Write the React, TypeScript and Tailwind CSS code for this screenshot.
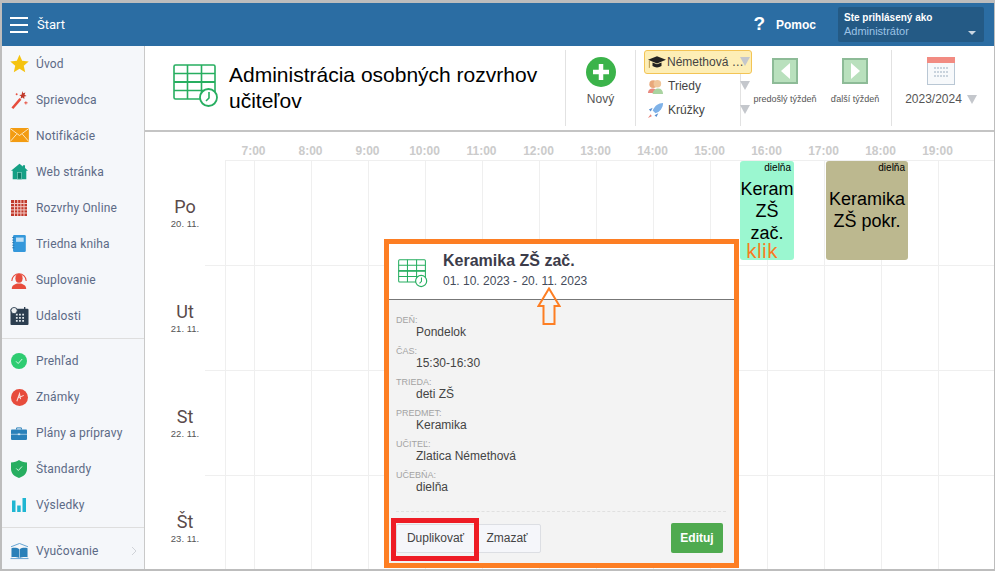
import React from "react";

const TableIcon = ({ className = "" }: { className?: string }) => (
  <svg viewBox="0 0 46 44" className={className} fill="none" stroke="#27ae60" strokeWidth="1.6">
    <rect x="1" y="1" width="41" height="34" rx="1.5" />
    <path d="M1 9.5H42M1 18H42M1 26.5H32M14.5 1V35M28.5 1V35" />
    <path d="M1 18H42" strokeWidth="2" />
    <circle cx="35.5" cy="33.5" r="8.5" fill="#fff" strokeWidth="1.8" />
    <path d="M36 28V34L33 37" strokeWidth="1.6" />
  </svg>
);

const Star = () => (
  <svg viewBox="0 0 20 20" className="w-[19px] h-[19px]"><path d="M10 .8l2.8 6.3 6.9.7-5.2 4.6 1.5 6.8L10 15.6l-6 3.6 1.5-6.8L.3 7.8l6.9-.7z" fill="#f5c30f" /></svg>
);
const Wand = () => (
  <svg viewBox="0 0 20 20" className="w-[19px] h-[19px]">
    <path d="M1.5 18.5L10 8.5l2 1.8L3.5 20z" fill="#e74c3c" />
    <path d="M13 1l.8 2.4 2.4-.8-.9 2.5 2.2 1.2-2.5.6.1 2.5-2-1.6-2 1.4.6-2.5-2-1.4 2.5-.3z" fill="#c0392b" />
    <path d="M15 13.5h3.5M16.7 12v3.2M6 4.5h2M7 3.5v2" stroke="#e74c3c" strokeWidth="1" />
  </svg>
);
const Mail = () => (
  <svg viewBox="0 0 20 16" className="w-[19px] h-[15px]">
    <rect width="20" height="15" fill="#f39c12" />
    <path d="M0 .5L10 8l10-7.500M0 14.500L7 6.500M20 14.500L13 6.500" stroke="#fdebc8" strokeWidth="1" fill="none" />
  </svg>
);
const House = () => (
  <svg viewBox="0 0 20 20" className="w-[17px] h-[17px]">
    <path d="M10 1l4 3V2.500h2.500V6L20 9h-2v10H2V9H0z" fill="#16a085" />
    <rect x="7.500" y="11" width="5" height="8" fill="#0e7c66" stroke="#7fd1c0" strokeWidth=".8" />
  </svg>
);
const Cal = () => (
  <svg viewBox="0 0 16 16" className="w-[16px] h-[16px]">
    <rect width="16" height="16" fill="#c0392b" />
    <path d="M3.500 0V16M6.700 0V16M9.900 0V16M13 0V16M0 3.500H16M0 6.700H16M0 9.900H16M0 13H16" stroke="#f3c9c4" strokeWidth="1" />
  </svg>
);
const Book = () => (
  <svg viewBox="0 0 16 20" className="w-[14px] h-[17px]">
    <rect x="1" width="15" height="20" rx="1.500" fill="#3498db" />
    <rect x="4.500" y="3" width="9" height="5" fill="#bfe0f6" />
    <path d="M0 3h2.500M0 6h2.500M0 9h2.500M0 12h2.500M0 15h2.500" stroke="#1f6fa8" strokeWidth="1" />
  </svg>
);
const Person = () => (
  <svg viewBox="0 0 20 20" className="w-[18px] h-[18px]">
    <path d="M2 11a8 8 0 1 1 16 0" fill="none" stroke="#e74c3c" strokeWidth="1.200" />
    <ellipse cx="10" cy="8" rx="4" ry="5" fill="#e74c3c" />
    <path d="M2 20c0-4 3-5 6-6h4c3 1 6 2 6 6z" fill="#e74c3c" />
  </svg>
);
const Events = () => (
  <svg viewBox="0 0 20 20" className="w-[19px] h-[18px]">
    <rect y="2" width="20" height="18" rx="1" fill="#2c3e50" />
    <path d="M6 7.500h2v2H6zM9.500 7.500h2v2h-2zM13 7.500h2v2h-2zM6 11h2v2H6zM9.500 11h2v2h-2zM13 11h2v2h-2zM6 14.500h2v2H6zM9.500 14.500h2v2h-2zM13 14.500h2v2h-2z" fill="#dfe6ea" />
    <circle cx="4" cy="4" r="3.500" fill="#eceff1" stroke="#2c3e50" />
    <rect x="15" width="1.500" height="4" fill="#2c3e50" />
  </svg>
);
const Check = () => (
  <svg viewBox="0 0 16 16" className="w-[16px] h-[16px]">
    <circle cx="8" cy="8" r="8" fill="#2ecc71" />
    <path d="M5 8.300l2.200 2.200L11.200 6" stroke="#d7f7e4" strokeWidth="1" fill="none" />
  </svg>
);
const Grade = () => (
  <svg viewBox="0 0 16 16" className="w-[17px] h-[17px]">
    <circle cx="8" cy="8" r="8" fill="#e74c3c" />
    <path d="M5.500 11.500L8 4.500l1 5M6.500 8.500L12 6" stroke="#fbdcd8" strokeWidth="1" fill="none" />
  </svg>
);
const Case = () => (
  <svg viewBox="0 0 20 16" className="w-[16px] h-[15px]">
    <path d="M7 3V1h6v2" fill="none" stroke="#2980b9" strokeWidth="1.200" />
    <rect y="3" width="20" height="13" rx="1" fill="#2980b9" />
    <path d="M0 9h20" stroke="#d5e8f5" strokeWidth=".8" />
    <rect x="8.500" y="8" width="3" height="2" fill="#d5e8f5" />
  </svg>
);
const Shield = () => (
  <svg viewBox="0 0 16 18" className="w-[16px] h-[18px]">
    <path d="M8 0c2 1.500 5 2.500 8 2.500V9c0 4.500-3.500 7.500-8 9-4.500-1.500-8-4.500-8-9V2.500C3 2.500 6 1.500 8 0z" fill="#27ae60" />
    <path d="M5.300 8.500l2 2L11 6.500" stroke="#d7f7e4" strokeWidth="1" fill="none" />
  </svg>
);
const Bars = () => (
  <svg viewBox="0 0 14 14" className="w-[14px] h-[14px]">
    <path d="M0 2.500h3.500V14H0zM5.200 7.500h3.500V14H5.200zM10.500 0H14v14h-3.500z" fill="#1fb6d2" />
  </svg>
);
const OpenBook = () => (
  <svg viewBox="0 0 20 18" className="w-[19px] h-[17px]">
    <path d="M1 4l9-3.500L19 4" fill="none" stroke="#5d9fd0" strokeWidth="1" />
    <path d="M1.500 5.500C4 4.800 8 5 9.700 6.500V16C8 14.800 4 14.600 1.500 15zM18.500 5.500C16 4.800 12 5 10.300 6.500V16c1.700-1.200 5.700-1.400 8.200-1z" fill="#2980b9" />
    <path d="M.5 16.500H19.500" stroke="#5d9fd0" strokeWidth="1" />
  </svg>
);

const Item = ({ icon, label, extra }: { icon: React.ReactNode; label: string; extra?: React.ReactNode }) => (
  <div className="h-[36px] flex items-center">
    <div className="w-[34px] flex justify-center items-center shrink-0">{icon}</div>
    <span className="text-[12px] text-[#5c6a86] font-['Roboto','Liberation_Sans',sans-serif] tracking-[0.15px]">{label}</span>
    {extra}
  </div>
);

const Tri = ({ className = "" }: { className?: string }) => (
  <span className={`w-0 h-0 inline-block border-l-[5px] border-r-[5px] border-t-[9px] border-l-transparent border-r-transparent border-t-[#c4c7cc] ${className}`} />
);

const NavSquare = ({ dir }: { dir: "l" | "r" }) => (
  <div className="w-[26px] h-[26px] bg-[#b9e0bd] border-2 border-[#8dbb97] flex items-center justify-center">
    <span className={`w-0 h-0 border-t-[8px] border-b-[8px] border-t-transparent border-b-transparent ${dir === "l" ? "border-r-[9px] border-r-white" : "border-l-[9px] border-l-white"}`} />
  </div>
);

const hours = ["7:00","8:00","9:00","10:00","11:00","12:00","13:00","14:00","15:00","16:00","17:00","18:00","19:00"];
const days = [["Po","20. 11."],["Ut","21. 11."],["St","22. 11."],["Št","23. 11."]];

const Field = ({ k, v }: { k: string; v: string }) => (
  <div className="h-[31px]">
    <div className="text-[9px] leading-[10px] text-[#a3a3a3]">{k}</div>
    <div className="text-[12px] leading-[14px] text-[#444] pl-[20px]">{v}</div>
  </div>
);

export default function App() {
  return (
    <div className="w-[995px] h-[571px] overflow-hidden relative bg-white border-l-2 border-t-[3px] border-b-2 border-r border-[#bdbdbd] font-['Liberation_Sans',Arial,sans-serif]">
      <header className="h-[43px] bg-[#2b6da3] flex items-center text-white">
        <div className="w-[34px] pl-[8px] shrink-0 flex flex-col gap-[5px]">
          <span className="h-[2px] w-[18px] bg-white" /><span className="h-[2px] w-[18px] bg-white" /><span className="h-[2px] w-[18px] bg-white" />
        </div>
        <span className="text-[13px] ml-[1px] font-['Roboto','Liberation_Sans',sans-serif]">Štart</span>
        <div className="ml-auto flex items-center mr-[10px]">
          <span className="text-[19px] font-bold mr-[11px]">?</span>
          <span className="text-[12px] font-bold mr-[22px]">Pomoc</span>
          <div className="w-[146px] h-[35px] bg-[#245a85] rounded-[2px] pl-[6px] pt-[5px] relative">
            <div className="text-[10px] leading-[12px] font-bold">Ste prihlásený ako</div>
            <div className="text-[11px] leading-[15px] text-[#9cc3e6]">Administrátor</div>
            <span className="absolute right-[8px] bottom-[7px] w-0 h-0 border-l-[4px] border-r-[4px] border-t-[4px] border-l-transparent border-r-transparent border-t-[#c9d6e2]" />
          </div>
        </div>
      </header>

      <div className="flex h-[523px]">
        <aside className="w-[143px] shrink-0 bg-[#f5f7fa] border-r border-[#c9c9c9] flex flex-col">
          <Item icon={<Star />} label="Úvod" />
          <Item icon={<Wand />} label="Sprievodca" />
          <Item icon={<Mail />} label="Notifikácie" />
          <Item icon={<House />} label="Web stránka" />
          <Item icon={<Cal />} label="Rozvrhy Online" />
          <Item icon={<Book />} label="Triedna kniha" />
          <Item icon={<Person />} label="Suplovanie" />
          <Item icon={<Events />} label="Udalosti" />
          <div className="border-t border-[#dedede] h-[6px] mt-[4px]" />
          <Item icon={<Check />} label="Prehľad" />
          <Item icon={<Grade />} label="Známky" />
          <Item icon={<Case />} label="Plány a prípravy" />
          <Item icon={<Shield />} label="Štandardy" />
          <Item icon={<Bars />} label="Výsledky" />
          <div className="border-t border-[#dedede] h-[6px] mt-[4px]" />
          <Item icon={<OpenBook />} label="Vyučovanie" extra={<svg viewBox="0 0 6 10" className="w-[6px] h-[10px] ml-auto mr-[7px]" fill="none" stroke="#d0d3d8" strokeWidth="1"><path d="M1 1l4 4-4 4" /></svg>} />
        </aside>

        <main className="flex-1 min-w-0 flex flex-col">
          <div className="h-[86px] shrink-0 bg-white border-b-[2px] border-[#c4c4c4] flex items-center">
            <div className="w-[420px] shrink-0 flex items-center pl-[28px]">
              <TableIcon className="w-[46px] h-[44px] mr-[10px] shrink-0 -mt-[5px]" />
              <h1 className="text-[21px] leading-[26px] text-black font-normal">Administrácia osobných rozvrhov učiteľov</h1>
            </div>
            <div className="h-[76px] w-[71px] border-l border-r border-[#e2e2e2] flex flex-col items-center pt-[7px] -mr-px">
              <svg viewBox="0 0 30 30" className="w-[30px] h-[30px] shrink-0"><circle cx="15" cy="15" r="15" fill="#3bb34a" /><path d="M15 7v16M7 15h16" stroke="#fff" strokeWidth="4.500" /></svg>
              <span className="text-[12px] text-[#555] mt-[3px]">Nový</span>
            </div>
            <div className="h-[76px] w-[106px] border-r border-[#e2e2e2] pl-[9px] flex flex-col text-[12px] text-[#444] relative">
              <div className="h-[24px] w-[108px] shrink-0 bg-[#fdeeb6] border border-[#f3c455] rounded-[3px] flex items-center pl-[3px] relative z-10">
                <svg viewBox="0 0 20 16" className="w-[18px] h-[15px] shrink-0 mr-[1px]"><path d="M0 5l10-4 10 4-10 4z" fill="#222" /><path d="M5 8v4c3 2 7 2 10 0V8l-5 2z" fill="#222" /><path d="M1.500 6v8" stroke="#b08a3a" strokeWidth="1" /></svg>
                <span className="whitespace-nowrap">Némethová …</span>
                <Tri className="absolute right-[1px] top-[6px]" />
              </div>
              <div className="h-[24px] flex items-center pl-[3px] relative">
                <svg viewBox="0 0 18 18" className="w-[17px] h-[17px] mr-[4px] shrink-0"><circle cx="6.500" cy="6.500" r="4" fill="#e8a77a" /><circle cx="11" cy="6" r="4" fill="#f0c69a" /><path d="M1 16c0-4 3-5 5-5s4 1 4 5z" fill="#e88a80" /><path d="M6 17c0-4 3-6 6-6s5 2 5 6z" fill="#a9d3a0" /></svg>
                <span>Triedy</span>
                <Tri className="absolute right-[-10px] top-[7px]" />
              </div>
              <div className="h-[24px] flex items-center pl-[3px] relative">
                <svg viewBox="0 0 18 18" className="w-[17px] h-[17px] mr-[4px] shrink-0"><path d="M17 1c-5 0-9 3-11 8l3 3c5-2 8-6 8-11z" fill="#7fb2e8" /><path d="M6 6L2 8l2 2zM12 12l-2 4-2-2z" fill="#5a90d0" /><path d="M4 13l-3 4 4-2z" fill="#e8837a" /></svg>
                <span>Krúžky</span>
                <Tri className="absolute right-[-10px] top-[7px]" />
              </div>
            </div>
            <div className="h-[76px] w-[151px] border-r border-[#e2e2e2] flex text-[9px] text-[#555] pt-[8px]">
              <div className="w-[88px] flex flex-col items-center"><NavSquare dir="l" /><span className="mt-[9px] whitespace-nowrap">predošlý týždeň</span></div>
              <div className="w-[52px] flex flex-col items-center"><NavSquare dir="r" /><span className="mt-[9px] whitespace-nowrap">ďalší týždeň</span></div>
            </div>
            <div className="h-[76px] flex-1 flex flex-col items-center pt-[7px] pr-[4px]">
              <svg viewBox="0 0 28 28" className="w-[28px] h-[28px] shrink-0"><rect x=".5" y=".5" width="27" height="27" fill="#f7f9fb" stroke="#b9c7d4" /><rect width="28" height="6" fill="#f28b82" /><path d="M7 11h14M7 15h14M7 19h14" stroke="#c9d3dd" strokeWidth="2" strokeDasharray="2 1" /></svg>
              <div className="text-[12px] text-[#555] mt-[5px] flex items-center gap-[5px]"><span>2023/2024</span><Tri /></div>
            </div>
          </div>

          <div className="flex-1 relative overflow-hidden">
            <div className="flex pl-[80px] h-[28px] text-[12px] font-bold text-[#cbcbcb]">
              <div className="w-[29px]" />
              {hours.map((h) => (<div key={h} className="w-[57px] shrink-0 relative"><span className="absolute -left-[28px] w-[57px] text-center top-[10px]">{h}</span></div>))}
            </div>
            {days.map(([d], i) => (
              <div key={d + i} className={`h-[105px] flex border-t border-[#efefef] ${i === 0 ? "ml-[80px]" : "ml-[60px]"}`}>
                <div className={`${i === 0 ? "hidden" : "w-[20px]"} shrink-0`} />
                <div className="w-[29px] border-l border-[#efefef] shrink-0" />
                {hours.map((h) => (<div key={h} className="w-[57px] border-l border-[#efefef] shrink-0" />))}
              </div>
            ))}
            {days.map(([d, n], i) => (
              <div key={d + "l" + i} className="absolute left-0 w-[80px] text-center" style={{ top: 66 + i * 105 }}>
                <div className="text-[18px] leading-[18px] text-[#5a4a4a] font-['Roboto','Liberation_Sans',sans-serif]">{d}</div>
                <div className="text-[9.5px] leading-[10px] mt-[3px] text-[#555]">{n}</div>
              </div>
            ))}

            <div className="absolute left-[595px] top-[29px] w-[54px] h-[99px] bg-[#9bf7d0] rounded-[3px] text-center text-black overflow-hidden pt-px">
              <div className="text-[10px] leading-[12px] text-right pr-[3px]">dielňa</div>
              <div className="text-[18px] leading-[22px] mt-[4px]">Keram<br />ZŠ<br />zač.</div>
            </div>
            <span className="absolute left-[601px] top-[109px] text-[20px] leading-[20px] text-[#f97b22] font-['Noto_Sans',sans-serif]">klik</span>
            <div className="absolute left-[681px] top-[29px] w-[82px] h-[99px] bg-[#bcb88f] rounded-[3px] text-center text-black pt-px">
              <div className="text-[10px] leading-[12px] text-right pr-[3px]">dielňa</div>
              <div className="text-[18px] leading-[22px] mt-[14px]">Keramika<br />ZŠ pokr.</div>
            </div>

            <div className="absolute left-[239px] top-[107px] w-[355px] h-[329px] border-[5px] border-[#fd7e23] bg-[#f3f3f3] flex flex-col">
              <div className="h-[56px] shrink-0 bg-white border-b border-[#777] flex items-start pl-[9px] pt-[7px]">
                <TableIcon className="w-[30px] h-[29px] mt-[8px] mr-[15px] shrink-0" />
                <div>
                  <div className="text-[16px] leading-[20px] font-bold text-[#3c3c4a]">Keramika ZŠ zač.</div>
                  <div className="text-[12px] leading-[20px] text-[#444b5a]">01. 10. 2023 - <span className="ml-[1px]">20. 11. 2023</span></div>
                </div>
              </div>
              <svg viewBox="0 0 24 38" className="absolute left-[148px] top-[43px] w-[24px] h-[38px]"><path d="M12 1.500L22.500 19H17.500V37H6.500V19H1.500z" fill="none" stroke="#fd7e23" strokeWidth="2" /></svg>
              <div className="flex-1 px-[7px] pt-[15px]">
                <Field k="DEŇ:" v="Pondelok" />
                <Field k="ČAS:" v="15:30-16:30" />
                <Field k="TRIEDA:" v="deti ZŠ" />
                <Field k="PREDMET:" v="Keramika" />
                <Field k="UČITEĽ:" v="Zlatica Némethová" />
                <Field k="UČEBŇA:" v="dielňa" />
              </div>
              <div className="ml-[7px] mr-[8px] mb-[10px] border-t border-dashed border-[#e0e0e0] pt-[11px] flex items-center">
                <div className="h-[29px] w-[145px] flex text-[12px] text-[#444] border border-[#dcdee3] rounded-[2px] bg-[#f5f6fa]">
                  <div className="w-[77px] flex items-center justify-center relative">
                    Duplikovať
                    <span className="absolute -left-[6px] -top-[7px] w-[88px] h-[43px] border-[5px] border-[#ee1c25]" />
                  </div>
                  <div className="flex-1 flex items-center justify-center">Zmazať</div>
                </div>
                <button className="ml-auto mr-[3px] w-[52px] h-[30px] bg-[#4faa4f] rounded-[2px] text-white text-[12px] font-bold">Edituj</button>
              </div>
            </div>
          </div>
        </main>
      </div>
    </div>
  );
}
